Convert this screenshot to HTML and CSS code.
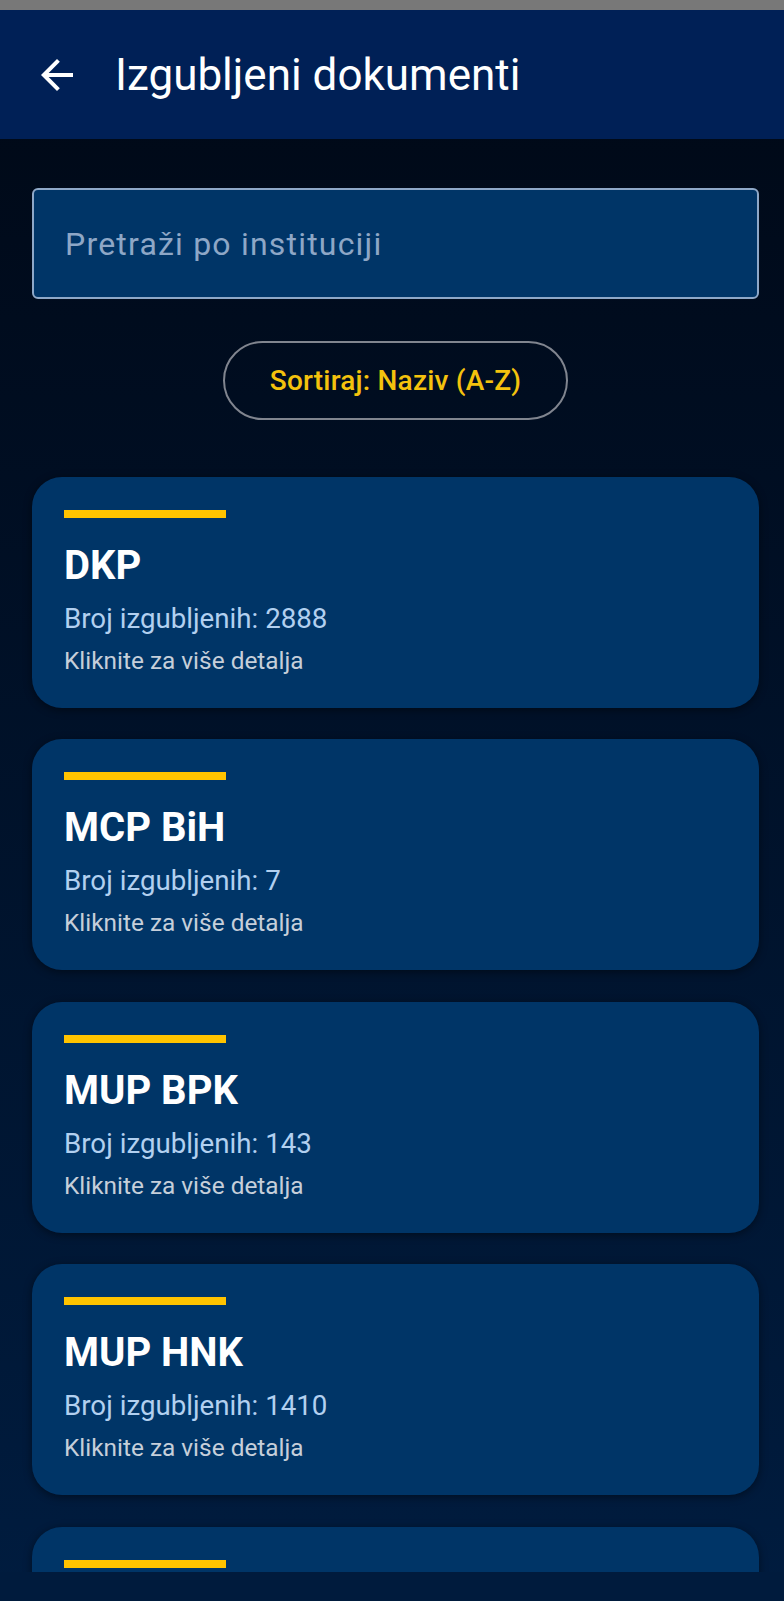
FILE: index.html
```html
<!DOCTYPE html>
<html lang="bs">
<head>
<meta charset="utf-8">
<title>Izgubljeni dokumenti</title>
<link rel="stylesheet" href="styles.css">
</head>
<body>
<div class="screen">
  <div class="status"></div>
  <header class="appbar">
    <svg class="back" viewBox="0 0 24 24" aria-hidden="true"><path d="M20 11H7.83l5.59-5.59L12 4l-8 8 8 8 1.41-1.41L7.83 13H20v-2z"/></svg>
    <h1 class="title">Izgubljeni dokumenti</h1>
  </header>
  <main class="content">
    <div class="search"><span class="placeholder">Pretraži po instituciji</span></div>
    <button class="sort">Sortiraj: Naziv (A-Z)</button>
    <div class="list">
      <div class="card">
        <div class="bar"></div>
        <div class="name">DKP</div>
        <div class="count">Broj izgubljenih: 2888</div>
        <div class="hint">Kliknite za više detalja</div>
      </div>
      <div class="card">
        <div class="bar"></div>
        <div class="name">MCP BiH</div>
        <div class="count">Broj izgubljenih: 7</div>
        <div class="hint">Kliknite za više detalja</div>
      </div>
      <div class="card">
        <div class="bar"></div>
        <div class="name">MUP BPK</div>
        <div class="count">Broj izgubljenih: 143</div>
        <div class="hint">Kliknite za više detalja</div>
      </div>
      <div class="card">
        <div class="bar"></div>
        <div class="name">MUP HNK</div>
        <div class="count">Broj izgubljenih: 1410</div>
        <div class="hint">Kliknite za više detalja</div>
      </div>
      <div class="card">
        <div class="bar"></div>
      </div>
    </div>
  </main>
  <div class="navbar"></div>
</div>
</body>
</html>
```
FILE: styles.css
```css
* { box-sizing: border-box; }
html, body { margin: 0; padding: 0; }
body {
  font-family: Roboto, "Noto Sans", sans-serif;
  background: #001b3d;
  width: 784px;
  height: 1601px;
  overflow: hidden;
}
.screen {
  display: flex;
  flex-direction: column;
  height: 1601px;
  background: linear-gradient(to bottom, #000814 0%, #000b1c 15%, #001c3f 100%);
}
.status {
  height: 10px;
  background: #787878;
  flex: none;
}
.appbar {
  height: 129px;
  flex: none;
  background: #002056;
  display: flex;
  align-items: center;
  padding-left: 33px;
}
.back {
  width: 48px;
  height: 48px;
  fill: #ffffff;
  flex: none;
}
.title {
  margin: 0 0 0 34px;
  font-size: 44px;
  font-weight: 400;
  color: #ffffff;
  line-height: 52px;
}
.content {
  height: 1433px;
  flex: none;
  overflow: hidden;
  padding: 49px 25px 0 32px;
  display: flex;
  flex-direction: column;
  align-items: center;
}
.search {
  width: 100%;
  height: 111px;
  flex: none;
  background: #003567;
  border: 2px solid #8ea8c8;
  border-radius: 6px;
  display: flex;
  align-items: center;
  padding-left: 31px;
}
.placeholder {
  font-size: 32px;
  color: #8ea7c6;
  letter-spacing: 1.2px;
}
.sort {
  margin-top: 42px;
  width: 345px;
  height: 79px;
  flex: none;
  background: transparent;
  border: 2px solid #80858f;
  border-radius: 40px;
  color: #f4c20d;
  font-family: Roboto, "Noto Sans", sans-serif;
  font-size: 28px;
  font-weight: 500;
  letter-spacing: 0.2px;
  padding: 0;
}
.list {
  margin-top: 57px;
  width: 100%;
  display: flex;
  flex-direction: column;
  gap: 31.4px;
}
.card {
  flex: none;
  height: 231px;
  background: #003567;
  border-radius: 30px;
  padding: 33px 32px 0 32px;
  box-shadow: 0 2px 8px rgba(0, 0, 0, 0.45);
}
.bar {
  width: 162px;
  height: 8px;
  background: #ffc400;
  margin-bottom: 24px;
}
.name {
  font-size: 40px;
  font-weight: 700;
  color: #ffffff;
  line-height: 48px;
}
.count {
  margin-top: 11px;
  font-size: 27.7px;
  color: #b2d0f0;
  line-height: 36px;
}
.hint {
  margin-top: 8px;
  font-size: 24.4px;
  color: #c6cfda;
  line-height: 32px;
}
.navbar {
  flex: 1;
  background: #001b3d;
}
```
